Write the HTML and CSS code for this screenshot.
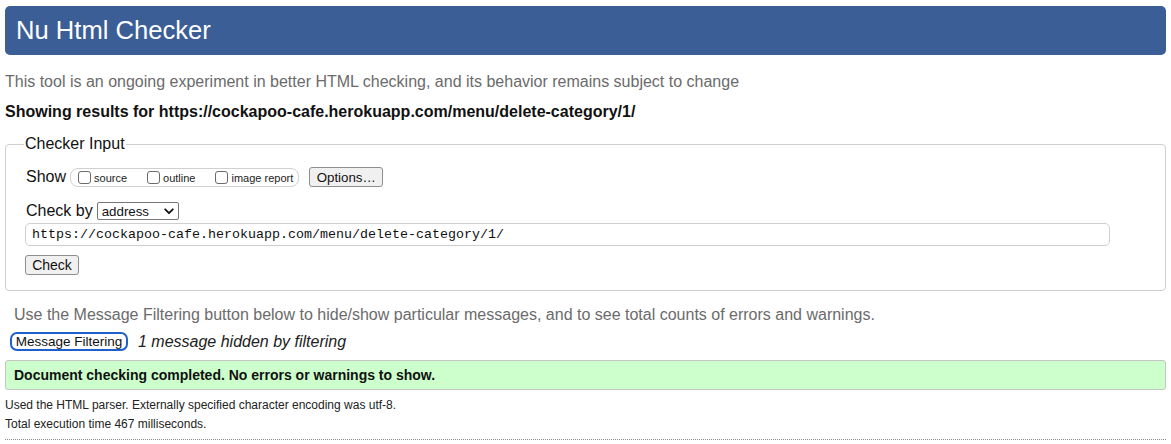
FILE: index.html
```html
<!DOCTYPE html>
<html lang="en">
<head>
<meta charset="utf-8">
<title>Nu Html Checker</title>
<link rel="stylesheet" href="styles.css">
</head>
<body>
<h1 class="title">Nu Html Checker</h1>
<p class="intro">This tool is an ongoing experiment in better HTML checking, and its behavior remains subject to change</p>
<p class="showing">Showing results for https://cockapoo-cafe.herokuapp.com/menu/delete-category/1/</p>
<fieldset class="checker">
  <legend class="legend">Checker Input</legend>
  <div class="row show-row">
    <span class="label">Show</span>
    <span class="extra">
      <label class="opt"><span class="cb"></span><span class="opt-text">source</span></label>
      <label class="opt"><span class="cb"></span><span class="opt-text">outline</span></label>
      <label class="opt"><span class="cb"></span><span class="opt-text">image report</span></label>
    </span>
    <span class="btn options">Options…</span>
  </div>
  <div class="row by-row">
    <span class="label">Check by</span>
    <span class="select">address<svg class="chev" width="10" height="7" viewBox="0 0 10 7"><path d="M1.2 1.3 L5 5.2 L8.8 1.3" fill="none" stroke="#111" stroke-width="1.8" stroke-linecap="round" stroke-linejoin="round"/></svg></span>
  </div>
  <div class="url">https://cockapoo-cafe.herokuapp.com/menu/delete-category/1/</div>
  <div class="row"><span class="btn check">Check</span></div>
</fieldset>
<p class="filter-note">Use the Message Filtering button below to hide/show particular messages, and to see total counts of errors and warnings.</p>
<div class="filter-row">
  <span class="btn filter">Message Filtering</span>
  <span class="hidden-note">1 message hidden by filtering</span>
</div>
<div class="success">Document checking completed. No errors or warnings to show.</div>
<p class="details first">Used the HTML parser. Externally specified character encoding was utf-8.</p>
<p class="details">Total execution time 467 milliseconds.</p>
<div class="rule"></div>
</body>
</html>
```

FILE: styles.css
```css
html, body {
  background: #fff;
}
body {
  margin: 0;
  padding: 0 5px;
  font-family: "Liberation Sans", Arial, Helvetica, sans-serif;
  font-size: 16px;
  color: #111;
}
.title {
  margin: 6px 0 0;
  height: 49px;
  line-height: 49px;
  padding: 0 11px;
  font-size: 25.6px;
  font-weight: normal;
  color: #fff;
  background: #3a5e95;
  border-radius: 5px;
}
.intro {
  margin: 18px 0 0;
  line-height: 18px;
  color: #6b6b6b;
}
.showing {
  margin: 12px 0 0;
  line-height: 18px;
  font-weight: bold;
  color: #111;
}
.checker {
  margin: 14px 0 0;
  padding: 4px 20px 15px 20px;
  border: 1px solid #cfcfcf;
  border-radius: 4px;
  min-width: 0;
}
.legend {
  padding: 0 1px;
  margin-left: -2px;
  font-size: 16px;
  line-height: 18px;
  color: #111;
}
.row {
  display: flex;
  align-items: center;
}
.show-row {
  margin-top: 10px;
  height: 20px;
}
.label {
  font-size: 16px;
  line-height: 18px;
  margin-right: 4px;
}
.extra {
  display: flex;
  align-items: center;
  height: 17px;
  border: 1px solid #d0d0d0;
  border-radius: 8px;
  padding: 0 5px 0 7px;
  gap: 20px;
}
.opt {
  display: flex;
  align-items: center;
}
.cb {
  width: 11px;
  height: 11px;
  border: 1px solid #6b6b6b;
  border-radius: 3px;
  margin-right: 3px;
  background: #fff;
}
.opt-text {
  font-size: 11px;
  color: #222;
  padding-top: 2px;
}
.btn {
  display: inline-flex;
  align-items: center;
  justify-content: center;
  box-sizing: border-box;
  font-size: 13.3px;
  color: #111;
  background: #f0f0f0;
  border: 1px solid #8e8e8e;
  border-radius: 3px;
}
.options {
  margin-left: 10px;
  width: 74px;
  height: 20px;
}
.by-row {
  margin-top: 15px;
  height: 18px;
}
.select {
  display: inline-flex;
  align-items: center;
  justify-content: space-between;
  box-sizing: border-box;
  width: 82px;
  height: 18px;
  padding: 0 4px 0 4px;
  border: 1px solid #777;
  border-radius: 2px;
  font-size: 13.3px;
  background: #fff;
}
.chev {
  display: block;
}
.url {
  margin-top: 3px;
  width: 1085px;
  box-sizing: border-box;
  height: 23px;
  line-height: 21px;
  padding: 0 6px;
  border: 1px solid #cfcfcf;
  border-radius: 5px;
  font-family: "Liberation Mono", "DejaVu Sans Mono", monospace;
  font-size: 13.33px;
  color: #111;
  margin-left: -1px;
}
.check {
  margin-top: 9px;
  margin-left: -1px;
  width: 54px;
  height: 20px;
  font-size: 14px;
}
.filter-note {
  margin: 15px 0 0 9px;
  line-height: 18px;
  color: #6b6b6b;
}
.filter-row {
  display: flex;
  align-items: center;
  margin-top: 8px;
  margin-left: 5px;
  height: 19px;
}
.filter {
  width: 118px;
  height: 19px;
  border: 2px solid #1d5fcc;
  border-radius: 7px;
  background: #fff;
  font-size: 13.5px;
}
.hidden-note {
  margin-left: 10px;
  font-style: italic;
  color: #222;
  line-height: 18px;
}
.success {
  margin-top: 9px;
  box-sizing: border-box;
  height: 30px;
  line-height: 28px;
  padding: 0 8px;
  background: #ccffcc;
  border: 1px solid #c4c4c4;
  border-radius: 3px;
  font-size: 14px;
  font-weight: bold;
  color: #111;
}
.details {
  margin: 0;
  font-size: 12px;
  line-height: 19px;
  color: #222;
}
.details.first {
  margin-top: 6px;
}
.rule {
  margin-top: 5px;
  border-top: 1px dotted #8a8a8a;
}
```
